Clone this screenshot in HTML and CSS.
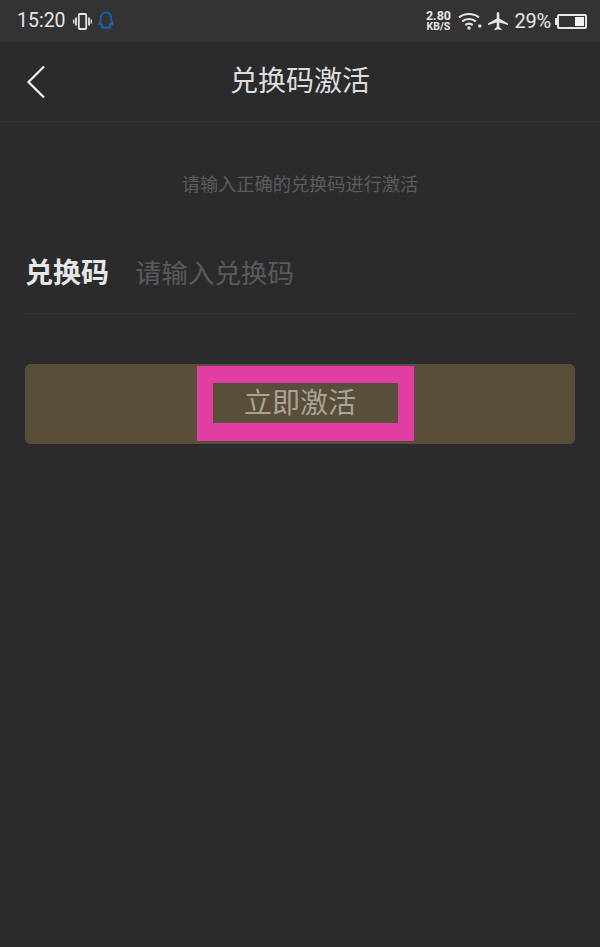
FILE: index.html
```html
<!DOCTYPE html>
<html lang="zh-CN">
    <head>
        <title>兑换码激活</title>
        <meta charset="UTF-8">
        <meta name="viewport" content="width=device-width, initial-scale=1">
        <link rel="stylesheet" href="styles.css">
    </head>
    <body>
        <div id="main">
            <div id="status">
                <div class="left">
                    <span class="time">15:20</span>
                    <svg class="vibrate" width="19" height="17" viewBox="0 0 19 17" fill="none" stroke="#e6e6e6">
                        <rect x="5.800" y="1" width="7.400" height="15" rx="1" stroke-width="1.800"/>
                        <path d="M3 4.500v8M16 4.500v8" stroke-width="1.800"/>
                        <path d="M.7 6.500v4M18.300 6.500v4" stroke-width="1.400"/>
                    </svg>
                    <svg class="qq" width="18" height="20" viewBox="0 0 18 20" fill="none" stroke="#1f5fa8" stroke-width="1.800">
                        <path d="M9 1.500c3.600 0 5.200 2.700 5.200 5.600v1.700l1.500 3.400c.4 1.200-.2 1.800-1.200 1.100l-.9-.7c-.2 1-.6 1.700-1.200 2.300 1 .4 1.400 1.100.6 1.600-1 .5-3 .4-4-.3-1 .7-3 .8-4 .3-.8-.5-.4-1.200.6-1.600-.6-.6-1-1.300-1.200-2.300l-.9.7c-1 .7-1.600.1-1.200-1.100l1.500-3.400V7.100C3.800 4.200 5.400 1.500 9 1.500z"/>
                    </svg>
                </div>
                <div class="right">
                    <div class="speed">
                        <div class="num">2.80</div>
                        <div class="unit">KB/S</div>
                    </div>
                    <svg class="wifi" width="24" height="18" viewBox="0 0 24 18" fill="none" stroke="#e6e6e6" stroke-width="2.200">
                        <path d="M1 5.500C6.800 .8 15.200 .8 21 5.500"/>
                        <path d="M4.200 9.300c3.900-3.100 9.700-3.100 13.600 0"/>
                        <path d="M7.300 13c2.200-1.600 5.200-1.600 7.400 0"/>
                        <circle cx="11" cy="16" r="1.700" fill="#e6e6e6" stroke="none"/>
                        <circle cx="21.800" cy="14" r="1.700" fill="#e6e6e6" stroke="none"/>
                    </svg>
                    <svg class="plane" width="20" height="19" viewBox="0 0 20 19" fill="#e6e6e6">
                        <path d="M10 0c.9 0 1.300 1.200 1.300 2.500V6.500L20 11.500V13l-8.700-2.600V15l2.200 2v1.300L10 17.300l-3.500 1V17l2.200-2v-4.600L0 13v-1.500l8.700-5V2.500C8.700 1.200 9.100 0 10 0z"/>
                    </svg>
                    <span class="percent">29%</span>
                    <div class="nub"></div>
                    <div class="battery">
                        <div class="level"></div>
                    </div>
                </div>
            </div>
            <div id="nav">
                <svg class="back" width="20" height="34" viewBox="0 0 20 34" fill="none" stroke="#f0f0f0" stroke-width="2.200">
                    <path d="M18 1.500L2.500 17 18 32.500"/>
                </svg>
                <h1>兑换码激活</h1>
            </div>
            <div id="content">
                <p class="tip">请输入正确的兑换码进行激活</p>
                <div class="field">
                    <span class="label">兑换码</span>
                    <span class="holder">请输入兑换码</span>
                </div>
                <div class="btn">
                    <div class="mark">立即激活</div>
                </div>
            </div>
        </div>
    </body>
</html>
```

FILE: styles.css
```css
body,p,h1{margin: 0;padding: 0}

html,body{height: 100%;overflow: hidden;background: #2b2b2d;font-family: Roboto, "Noto Sans CJK SC", sans-serif}

#main{height: 947px}

#status{height: 42px;background: #333333;display: flex;justify-content: space-between;align-items: center;padding: 0 13px 0 17px;box-sizing: border-box;color: #e6e6e6}
#status .left{display: flex;align-items: center}
#status .right{display: flex;align-items: center}
#status .time{font-size: 19.500px;line-height: 42px}
#status .vibrate{margin-left: 7px}
#status .qq{margin-left: 5px}
#status .speed{width: 30px;text-align: center;font-weight: bold;margin-right: 5px}
#status .num{font-size: 12.500px;line-height: 11px}
#status .unit{font-size: 10.500px;line-height: 11px}
#status .wifi{margin-right: 6px}
#status .plane{margin-right: 6px}
#status .percent{font-size: 20px;font-weight: 400;margin-right: 4px;letter-spacing: -.2px}
#status .nub{width: 2px;height: 7px;background: #e6e6e6}
#status .battery{width: 30px;height: 15px;border: 2px solid #e6e6e6;border-radius: 2px;box-sizing: border-box;display: flex;justify-content: flex-end;align-items: center;padding-right: 1px}
#status .level{width: 9px;height: 9px;background: #f2f2f2}

#nav{height: 80px;border-bottom: 1px solid #323234;box-sizing: border-box;display: flex;align-items: center;justify-content: center;position: relative}
#nav h1{font-size: 28px;font-weight: 400;color: #dedede;line-height: 82px}
#nav .back{position: absolute;left: 26px;top: 23px}

#content{padding: 0 25px}
.tip{font-size: 18.200px;line-height: 24px;color: #5c5c5e;text-align: center;margin-top: 51px}

.field{height: 79px;margin-top: 38px;border-bottom: 1px solid #323234;display: flex;align-items: center;padding-bottom: 6px;box-sizing: border-box}
.field .label{font-size: 28px;font-weight: 700;color: #e8e8e8}
.field .holder{font-size: 26.500px;color: #5a5a5c;margin-left: 26px}

.btn{height: 80px;margin-top: 50px;background: #584e39;border-radius: 6px;display: flex;justify-content: center;align-items: center;padding: 0 0 1px 11px;box-sizing: border-box}
.mark{width: 174px;height: 40px;padding-right: 11px;border: solid #e03ea3;border-width: 17px 16px 18px;line-height: 42px;text-align: center;font-size: 28px;color: #a9a395}
```
